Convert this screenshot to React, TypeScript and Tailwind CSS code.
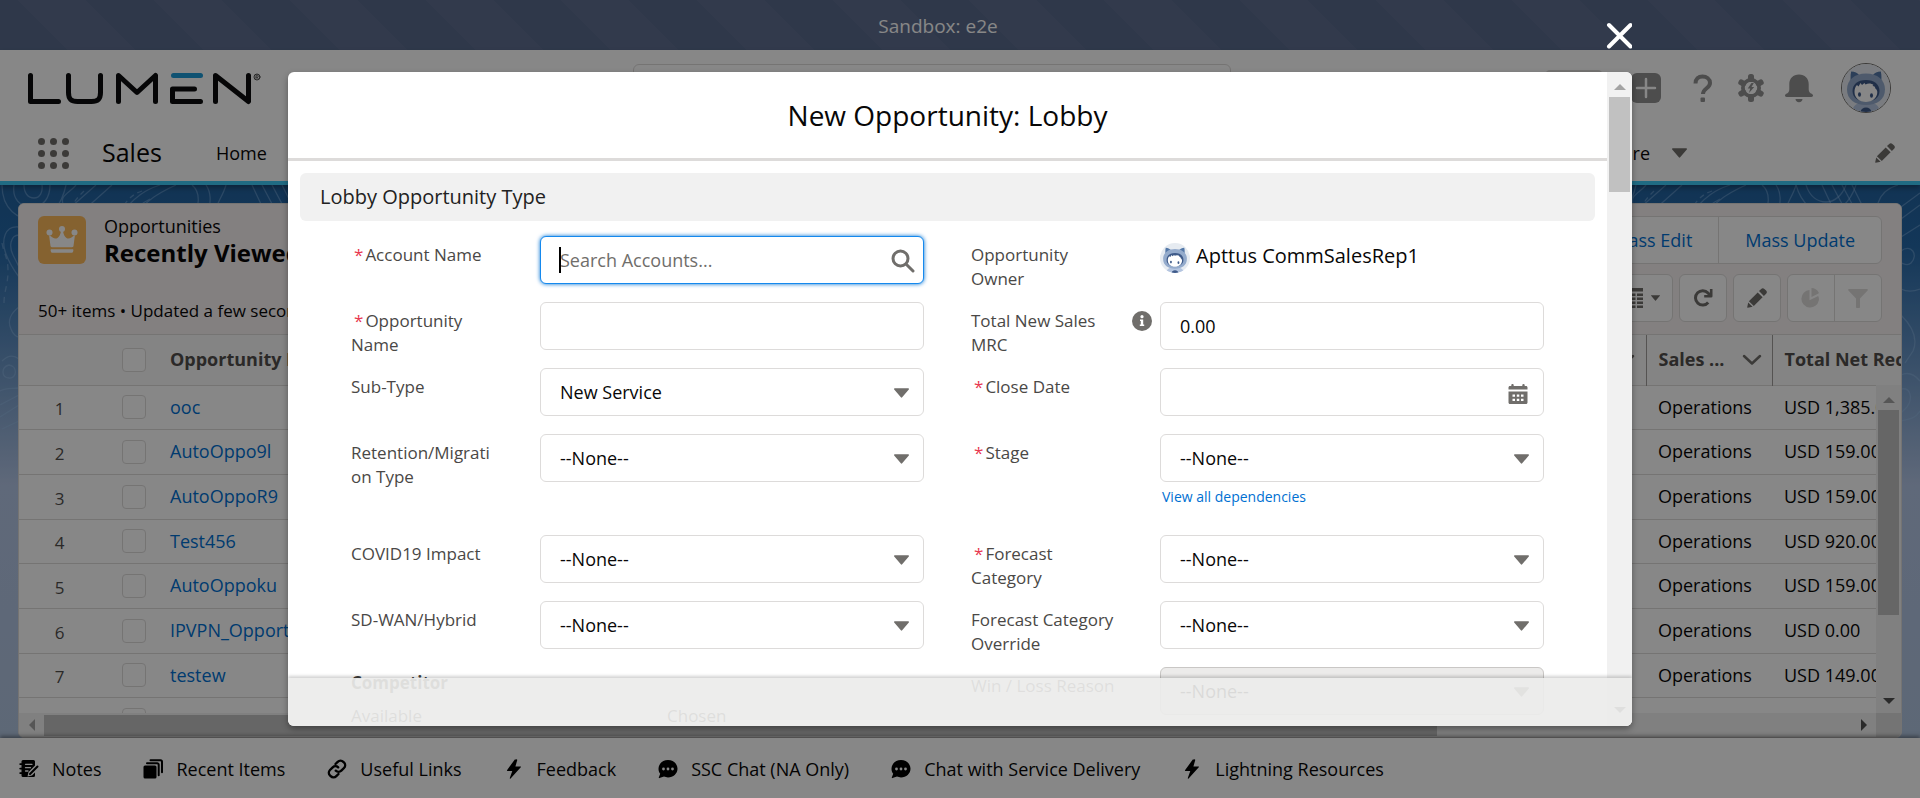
import type { ReactNode } from "react";

type IconProps = { className?: string };

const rows = [
  { name: "ooc", amount: "USD 1,385.00" },
  { name: "AutoOppo9l", amount: "USD 159.00" },
  { name: "AutoOppoR9", amount: "USD 159.00" },
  { name: "Test456", amount: "USD 920.00" },
  { name: "AutoOppoku", amount: "USD 159.00" },
  { name: "IPVPN_Opportunity", amount: "USD 0.00" },
  { name: "testew", amount: "USD 149.00" },
  { name: "", amount: "" },
];

function Triangle({ className = "" }: IconProps) {
  return (
    <svg viewBox="0 0 16 10" className={className} fill="currentColor" aria-hidden="true">
      <path d="M.8 0h14.4c.7 0 1 .7.6 1.200L8.700 9.600c-.4.500-1 .5-1.400 0L.2 1.200C-.2.700.1 0 .8 0z" />
    </svg>
  );
}

function ScrollArrow({ className = "" }: IconProps) {
  return (
    <svg viewBox="0 0 12 6" className={className} fill="currentColor" aria-hidden="true">
      <path d="M6 0l6 6H0z" />
    </svg>
  );
}

function Logo() {
  return (
    <svg viewBox="0 0 236 36" className="h-9 w-[236px]" fill="none" strokeWidth="5" strokeLinecap="round" strokeLinejoin="round" role="img" aria-label="Lumen">
      <g stroke="#0c0d0e">
        <path d="M4.500 5.500v26h28" />
        <path d="M42.500 5.500v17c0 6.500 2.500 9 9 9h14c6.500 0 9-2.500 9-9v-17" />
        <path d="M92.500 31.500v-26l18.500 17 18.500-17v26" />
        <path d="M174.500 31.500h-28v-12.500h22" />
        <path d="M189.500 31.500v-26l33 26v-26" />
      </g>
      <path d="M147.500 5.500h27" stroke="#1e9bd7" />
      <circle cx="231" cy="7" r="3" stroke="#4a4a4a" strokeWidth="1" />
      <path d="M230 8.800v-3.600h1.300a1 1 0 010 2h-1.300m1.200 0l1 1.600" stroke="#4a4a4a" strokeWidth="0.800" />
    </svg>
  );
}

function Astro({ className = "" }: IconProps) {
  return (
    <svg viewBox="1 1 48 48" className={className} aria-hidden="true">
      <defs>
        <clipPath id="astro-clip">
          <circle cx="25" cy="25" r="24" />
        </clipPath>
      </defs>
      <g clipPath="url(#astro-clip)">
        <rect width="50" height="50" fill="#e6ebf1" />
        <path d="M11 50c0-7 5-11 14-11s14 4 14 11z" fill="#b4c5e0" />
        <path d="M10 22c-.500-5-.8-10 .2-13.500 3.500 0 6.300 1.500 8.300 4z" fill="#5478a8" />
        <path d="M40 22c.5-5 .8-10-.2-13.500-3.500 0-6.300 1.500-8.300 4z" fill="#5478a8" />
        <path d="M25 10.500c11.500 0 19 6.500 19 16 0 10-8 15.500-19 15.500S6 36.500 6 26.500c0-9.500 7.500-16 19-16z" fill="#94abcc" />
        <path d="M25 17c8.500 0 13.500 4.500 13.500 11S33 38.500 25 38.500 11.500 34.500 11.500 28 16.500 17 25 17z" fill="#3e5a89" />
        <path d="M13.500 29c0-3 .8-5.500 2.500-7l1.500 1.500 2-3.500 1.500 2 2.500-2 1 1.500c3-1.500 6-1 8 .5l-1 .8 2.800 1.200-.5 1c1.500 1 2.500 2.500 2.500 4 0 6-5 10-11.400 10S13.500 35 13.500 29z" fill="#fff" />
        <ellipse cx="18.500" cy="31.500" rx="1.500" ry="2.200" fill="#3e5a89" />
        <ellipse cx="30.500" cy="32.500" rx="1.500" ry="2.200" fill="#3e5a89" />
        <path d="M19.500 50c0-3.500 2.200-5.500 5.500-5.500s5.500 2 5.500 5.500z" fill="#3e5a89" />
      </g>
    </svg>
  );
}

function Pencil({ className = "" }: IconProps) {
  return (
    <svg viewBox="0 0 20 20" className={className} fill="currentColor" aria-hidden="true">
      <path d="M1.900 13.200l8.800-8.800 4.900 4.900-8.800 8.800zM.2 19.200l1-4.800 4.400 4.400-4.800 1c-.4.100-.7-.2-.6-.6zM12 3.100L14.200.9c1-1 2.200-1 3.200 0l1.700 1.700c1 1 1 2.200 0 3.200L16.900 8z" />
    </svg>
  );
}

function QuestionIcon() {
  return (
    <svg viewBox="0 0 28 30" className="h-[30px] w-7" fill="none" aria-hidden="true">
      <path d="M6.500 10.500C6.500 6 9.500 3.500 13.500 3.500S21 6 21 10c0 5.500-7 5-7 11" stroke="currentColor" strokeWidth="4" />
      <rect x="11.500" y="24.500" width="4.500" height="4.500" rx="1" fill="currentColor" />
    </svg>
  );
}

function GearIcon() {
  return (
    <svg viewBox="0 0 28 30" className="h-[30px] w-7" aria-hidden="true">
      <g fill="currentColor">
        {[0, 60, 120, 180, 240, 300].map((a) => (
          <rect key={a} x="11" y="1" width="6" height="8" rx="2.500" transform={`rotate(${a} 14 15)`} />
        ))}
        <path fillRule="evenodd" d="M14 5a10 10 0 110 20 10 10 0 010-20zm0 3.800a6.200 6.200 0 100 12.400 6.200 6.200 0 000-12.400z" />
        <path d="M14.500 10l-3.800 5.500h2.500l-1.200 4.500 5.200-6h-2.700l2.300-4z" />
      </g>
    </svg>
  );
}

function BellIcon() {
  return (
    <svg viewBox="0 0 28 30" className="h-[30px] w-7" fill="currentColor" aria-hidden="true">
      <path d="M14 1.500c-5.800 0-9.700 4-9.700 9.500v5.500c0 2.500-1.300 3.500-3 4.300-1.900.9-1.700 3.200.3 3.200h24.800c2 0 2.200-2.300.3-3.200-1.700-.8-3-1.800-3-4.300V11c0-5.500-3.900-9.500-9.700-9.500zM10.500 26h7c0 2-1.500 3.200-3.500 3.200S10.500 28 10.500 26z" />
    </svg>
  );
}

function Crown() {
  return (
    <svg viewBox="0 0 48 48" className="size-12" fill="#fff" aria-hidden="true">
      <path d="M12 19.500c2 2 5 4 7.500 2.500 2-1.300 3-4 3.500-7h2c.5 3 1.500 5.700 3.500 7 2.500 1.500 5.500-.5 7.500-2.500h.9L35.500 30c-.2.800-.7 1.200-1.500 1.200H14c-.8 0-1.300-.4-1.500-1.200L11.100 19.500z" />
      <circle cx="24" cy="13" r="3" />
      <circle cx="11.500" cy="16.500" r="3" />
      <circle cx="36.500" cy="16.500" r="3" />
      <path d="M13.500 33.300h21c.6 0 1 .4.900 1l-.2.900c-.2 1-.9 1.600-1.900 1.600H14.700c-1 0-1.700-.6-1.900-1.600l-.2-.9c-.1-.6.300-1 .9-1z" />
    </svg>
  );
}

function ColumnChevron({ className = "" }: IconProps) {
  return (
    <svg viewBox="0 0 20 12" className={className} fill="none" stroke="#706e6b" strokeWidth="2.500" strokeLinecap="round" strokeLinejoin="round" aria-hidden="true">
      <path d="M2 2l8 7.500L18 2" />
    </svg>
  );
}

function NotesIcon() {
  return (
    <svg viewBox="0 0 20 20" className="size-5" aria-hidden="true">
      <path d="M4 1h10.500A1.500 1.500 0 0116 2.500v4L9.500 13l-1 4.500 4.500-1 3-3v3a1.500 1.500 0 01-1.500 1.500H4A1.500 1.500 0 012.500 16.500V15H1.200a.9.900 0 010-1.800H2.500V10.500H1.200a.9.900 0 010-1.800H2.500V6H1.200a.9.900 0 010-1.800H2.500V2.500A1.500 1.500 0 014 1z" fill="#000" />
      <path d="M6.500 5.300h6.500M6.500 8.700h5M6.500 12h2.500" stroke="#fff" strokeWidth="1.300" strokeLinecap="round" />
      <path d="M11 15l6.500-6.500M17 9l1.500-1.500" stroke="#000" strokeWidth="2" strokeLinecap="round" />
    </svg>
  );
}

function CopiesIcon() {
  return (
    <svg viewBox="0 0 20 20" className="size-5" aria-hidden="true">
      <rect x="0.500" y="6.500" width="13" height="13" rx="1.500" fill="#000" />
      <path d="M4 4.300h10.200a1.500 1.500 0 011.500 1.500v10.500M7.500 1.300h10A1.500 1.500 0 0119 2.800v10.500" fill="none" stroke="#000" strokeWidth="2" strokeLinecap="round" />
    </svg>
  );
}

function ChainIcon() {
  return (
    <svg viewBox="0 0 20 20" className="size-5" fill="none" stroke="#000" strokeWidth="2.400" strokeLinecap="round" aria-hidden="true">
      <path d="M8.500 5l2.200-2.200a3.900 3.900 0 015.600 0l.7.700a3.900 3.900 0 010 5.500l-2.700 2.700a3.900 3.900 0 01-5.500 0" />
      <path d="M11.500 15l-2.200 2.200a3.900 3.900 0 01-5.600 0L3 16.500A3.900 3.900 0 013 11l2.700-2.700a3.900 3.900 0 015.500 0" />
    </svg>
  );
}

function BoltIcon() {
  return (
    <svg viewBox="0 0 20 20" className="size-5" aria-hidden="true">
      <path d="M10.800.5L3 11.200c-.3.400 0 .8.400.8h4.900L5.800 19c-.2.600.4.900.8.400L16.800 8.200c.3-.4.100-.8-.4-.8h-5l1.800-6.100c.2-.8-.5-1.200-1-.8z" fill="#000" />
    </svg>
  );
}

function ChatIcon() {
  return (
    <svg viewBox="0 0 20 20" className="size-5" aria-hidden="true">
      <path d="M10 1c5.300 0 9.500 3.900 9.500 8.700s-4.200 8.700-9.500 8.700c-1.400 0-2.800-.3-4-.8l-4.600 1.500c-.5.200-.8-.2-.6-.7l1.400-3.700C1.100 13.300.5 11.600.5 9.700.5 4.900 4.700 1 10 1z" fill="#000" />
      <circle cx="5.500" cy="10" r="1.400" fill="#fff" />
      <circle cx="10" cy="10" r="1.400" fill="#fff" />
      <circle cx="14.500" cy="10" r="1.400" fill="#fff" />
    </svg>
  );
}

const utilities = [
  { label: "Notes", Icon: NotesIcon },
  { label: "Recent Items", Icon: CopiesIcon },
  { label: "Useful Links", Icon: ChainIcon },
  { label: "Feedback", Icon: BoltIcon },
  { label: "SSC Chat (NA Only)", Icon: ChatIcon },
  { label: "Chat with Service Delivery", Icon: ChatIcon },
  { label: "Lightning Resources", Icon: BoltIcon },
];

function Topography() {
  return (
    <svg className="absolute inset-0 h-full w-full" fill="none" stroke="#9cc3ee" strokeOpacity="0.4" strokeWidth="1.300" aria-hidden="true">
      <defs>
        <g id="contours">
          <path d="M14 0c-2 14 6 22 18 22S50 12 50 0M24 0c0 8 4 13 10 13s9-6 8-13M2 0c0 24 16 36 34 34S62 18 66 0" />
          <path d="M76 0c-6 8-18 10-12 22M96 0L62 30M112 0L74 34M160 0c-12 4-26 10-42 34M176 0c-22 10-32 18-44 34M192 0c10 8 6 22 2 34M206 0c8 12 2 24 2 34M150 14c-8 4-18 12-24 20" />
          <path d="M226 0c-4 14-12 20-12 34M252 0l16 34M262 0l18 34M272 0l18 34M282 0l12 24" />
          <path d="M84 6c-6 6-12 12-14 22M142 6c-12 4-18 12-24 26" strokeDasharray="5 4" />
        </g>
      </defs>
      <use href="#contours" />
      <use href="#contours" x="1570" />
      <path d="M1898 0c-14 4-18 12-20 18M1806 0c4 12 12 17 20 17s16-6 20-17M1796 0c6 20 18 28 30 28s24-10 30-28" />
      <path d="M19 42C4 40 2 56 5 66s8 18 14 26M19 50c-9 0-10 12-6 20l6 12M19 122c-8 6-12 14-8 22 2 6 6 8 8 8M2 176c6-6 12-6 17-2M9 180c-8 2-8 12 0 13s9-12 0-13M0 206c6-4 12-2 19-3M0 220l19-10M0 232l19-12M2 244l17-8" />
      <path d="M2 58c2 12 6 14 6 28s-4 20-4 32" strokeDasharray="6 5" />
      <path d="M1901 22l19-14M1901 34l19-14M1901 52l19-12M1901 66c10-8 18 4 10 12-4 4-8 0-10 0M1901 104c8 4 14 2 19 0M1901 130c10 10 18 22 12 36l-8 12M1901 190c8-4 14 0 19 6M1901 204c10-2 12 10 6 18l-6 6M1901 236c8-2 14-2 19-10" />
    </svg>
  );
}

function ControlSelect({ id, value, disabled }: { id: string; value: string; disabled?: boolean }) {
  return (
    <div className="relative">
      <select
        id={id}
        disabled={disabled}
        className="block h-12 w-full appearance-none rounded-[6px] border border-[#dddbda] bg-white px-[19px] text-[18px] text-[#080707] opacity-100 disabled:border-[#c9c7c5] disabled:bg-[#ecebea]"
      >
        <option>{value}</option>
      </select>
      <Triangle className="pointer-events-none absolute top-5 right-[15px] h-[10px] w-[15px] text-[#706e6b]" />
    </div>
  );
}

function Field({ id, label, required, info, children }: { id?: string; label: string; required?: boolean; info?: boolean; children: ReactNode }) {
  return (
    <div className="flex min-h-[55px] items-start">
      <div className="flex w-[189px] shrink-0 justify-between pt-[7px] pr-2">
        <label htmlFor={id} className="w-[146px] text-[17px] leading-6 break-words text-[#4a4846]">
          {required && <span className="pr-[2px] pl-[3px] text-[#e8384f]">*</span>}
          {label}
        </label>
        {info && (
          <button type="button" aria-label="Help" className="mt-[2px] size-5 rounded-full bg-[#706e6b] text-white">
            <svg viewBox="0 0 20 20" className="size-5" fill="currentColor" aria-hidden="true">
              <circle cx="10" cy="5.700" r="1.600" />
              <path d="M8 8.500h3.200v5h1v1.500H7.800v-1.500h1V10H8z" />
            </svg>
          </button>
        )}
      </div>
      <div className="min-w-0 flex-1">{children}</div>
    </div>
  );
}

const inputClass = "block h-12 w-full rounded-[6px] border border-[#dddbda] bg-white px-[19px] text-[18px] text-[#080707] outline-none";

function Modal() {
  return (
    <div role="dialog" aria-label="New Opportunity: Lobby" className="absolute inset-y-[72px] left-[15%] w-[70%]">
      <button type="button" aria-label="Close" className="absolute -top-[50px] right-0 size-7 text-white">
        <svg viewBox="0 0 28 28" className="size-7" stroke="currentColor" strokeWidth="4" strokeLinecap="round" aria-hidden="true">
          <path d="M5 3l21.500 21.500M26.500 3L5 24.500" />
        </svg>
      </button>
      <div className="relative flex h-full overflow-hidden rounded-[6px] bg-white shadow-[0_3px_6px_rgba(0,0,0,0.35)]">
        <div className="min-w-0 flex-1 overflow-hidden">
          <header className="flex h-[89px] items-center justify-center border-b-[3px] border-[#dddbda]">
            <h2 className="text-[28px] leading-9 text-[#080707]">New Opportunity: Lobby</h2>
          </header>
          <h3 className="mx-3 mt-3 flex h-12 items-center rounded-[6px] bg-[#f1f1f1] px-5 text-[20px] text-[#222]">Lobby Opportunity Type</h3>
          <form className="mt-[15px] grid grid-cols-2 gap-x-[47px] gap-y-[11px] px-[63px]">
            <Field id="account" label="Account Name" required>
              <div className="relative">
                <input
                  id="account"
                  placeholder="Search Accounts..."
                  className="block h-12 w-full rounded-[6px] border border-[#1589ee] bg-white px-[19px] text-[18px] shadow-[0_0_4px_#0070d2] outline-none placeholder:text-[#706e6b]"
                />
                <span className="absolute top-[11px] left-[19px] h-[26px] w-[2px] bg-black" />
                <svg viewBox="0 0 24 24" className="absolute top-[13px] right-[9px] size-6 text-[#706e6b]" fill="none" stroke="currentColor" strokeLinecap="round" aria-hidden="true">
                  <circle cx="9.500" cy="9.500" r="7.500" strokeWidth="3" />
                  <path d="M15.500 15.500l6.500 6.500" strokeWidth="3" />
                </svg>
              </div>
            </Field>
            <Field label="Opportunity Owner">
              <div className="flex items-start gap-[6px]">
                <Astro className="mt-[7px] size-[30px]" />
                <span className="pt-[5px] text-[20px] leading-[30px] text-[#080707]">Apttus CommSalesRep1</span>
              </div>
            </Field>
            <Field id="name" label="Opportunity Name" required>
              <input id="name" className={inputClass} />
            </Field>
            <Field id="mrc" label="Total New Sales MRC" info>
              <input id="mrc" defaultValue="0.00" className={inputClass} />
            </Field>
            <Field id="subtype" label="Sub-Type">
              <ControlSelect id="subtype" value="New Service" />
            </Field>
            <Field id="close" label="Close Date" required>
              <div className="relative">
                <input id="close" className={inputClass} />
                <svg viewBox="0 0 20 20" className="absolute top-4 right-4 size-5 text-[#706e6b]" fill="currentColor" aria-hidden="true">
                  <path d="M4.500 0c.7 0 1.200.5 1.200 1.200V2h8.600v-.8a1.200 1.200 0 012.400 0V2H18c.9 0 1.500.6 1.500 1.500V5.500H.5V3.500C.5 2.600 1.100 2 2 2h1.300v-.8C3.300.5 3.800 0 4.500 0z" />
                  <path fillRule="evenodd" d="M.5 7.500h19v11c0 .9-.6 1.500-1.500 1.500H2c-.9 0-1.500-.6-1.500-1.500zM4.500 10.500v2.200h2.500v-2.200zm4.300 0v2.200h2.500v-2.200zm4.200 0v2.200h2.500v-2.200zM4.500 14.800V17h2.500v-2.200zm4.300 0V17h2.500v-2.200zm4.200 0V17h2.500v-2.200z" />
                </svg>
              </div>
            </Field>
            <Field id="retention" label="Retention/Migration Type">
              <ControlSelect id="retention" value="--None--" />
            </Field>
            <Field id="stage" label="Stage" required>
              <ControlSelect id="stage" value="--None--" />
              <a href="#dependencies" className="mt-[5px] mb-[17px] block pl-[2px] text-[14px] leading-5 text-[#0070d2]">View all dependencies</a>
            </Field>
            <Field id="covid" label="COVID19 Impact">
              <ControlSelect id="covid" value="--None--" />
            </Field>
            <Field id="forecast" label="Forecast Category" required>
              <ControlSelect id="forecast" value="--None--" />
            </Field>
            <Field id="sdwan" label="SD-WAN/Hybrid">
              <ControlSelect id="sdwan" value="--None--" />
            </Field>
            <Field id="override" label="Forecast Category Override">
              <ControlSelect id="override" value="--None--" />
            </Field>
            <div className="pt-1 text-[17px] leading-6 text-[#3e3e3c]">
              <div className="font-bold">Competitor</div>
              <div className="grid grid-cols-[316px_1fr] pt-[9px]">
                <span>Available</span>
                <span>Chosen</span>
              </div>
            </div>
            <Field id="reason" label="Win / Loss Reason">
              <ControlSelect id="reason" value="--None--" disabled />
            </Field>
          </form>
        </div>
        <div className="flex w-[25px] shrink-0 flex-col items-center bg-[#f1f1f1]">
          <div className="flex h-[25px] items-center pt-1">
            <ScrollArrow className="h-[6px] w-3 text-[#a3a3a3]" />
          </div>
          <div className="h-[95px] w-[21px] bg-[#c1c1c1]" />
          <div className="mt-auto flex h-[25px] items-center pb-2">
            <ScrollArrow className="h-[6px] w-3 rotate-180 text-[#505050]" />
          </div>
        </div>
        <div className="absolute inset-x-0 bottom-0 h-12 bg-[#ecebea]/92 shadow-[0_-2px_3px_rgba(0,0,0,0.18)]" />
      </div>
    </div>
  );
}

const toolButton = "flex size-12 items-center justify-center rounded-[6px] border border-[#dddbda] bg-white text-[#706e6b]";

function Page() {
  return (
    <div className="flex h-full flex-col">
      <div className="flex h-[50px] shrink-0 items-center justify-center bg-[repeating-linear-gradient(45deg,#596b8d_0_48px,#5f6e90_48px_96px)] pt-[2px] pr-11 text-[19px] text-white">
        Sandbox: e2e
      </div>

      <header className="relative z-10 shrink-0 border-b-4 border-[#3ecbf8] bg-white shadow-[0_3px_5px_rgba(0,0,0,0.3)]">
        <div className="flex h-[75px] items-center justify-between pr-[29px] pl-[26px]">
          <Logo />
          <div className="flex items-center gap-7 text-[#919191]">
            <div className="flex h-9 w-[58px] rounded-[5px] border-2 border-[#dddbda]">
              <span className="ml-auto w-6 rounded-r-[5px] border-2 border-[#919191]" />
            </div>
            <button type="button" aria-label="Add" className="size-[30px] rounded-[6px] bg-[#919191] text-white">
              <svg viewBox="0 0 30 30" className="size-[30px]" stroke="currentColor" strokeWidth="2.500" strokeLinecap="round" aria-hidden="true">
                <path d="M15 6v18M6 15h18" />
              </svg>
            </button>
            <div className="flex gap-5">
              <button type="button" aria-label="Help"><QuestionIcon /></button>
              <button type="button" aria-label="Setup"><GearIcon /></button>
              <button type="button" aria-label="Notifications"><BellIcon /></button>
            </div>
            <button type="button" aria-label="Profile" className="rounded-full border border-[#706e6b]">
              <Astro className="size-12" />
            </button>
          </div>
        </div>
        <input aria-label="Search" className="absolute top-[14px] left-[633px] h-12 w-[598px] rounded-[6px] border border-[#dddbda] bg-white" />
        <nav className="flex h-14 items-center pr-[25px] pl-[38px]">
          <button type="button" aria-label="App launcher" className="grid grid-cols-3 gap-[5px]">
            {Array.from({ length: 9 }, (_, i) => (
              <span key={i} className="size-[7px] rounded-full bg-[#706e6b]" />
            ))}
          </button>
          <span className="ml-[33px] text-[25px] text-[#080707]">Sales</span>
          <a href="#home" className="ml-[54px] text-[18px] text-[#080707]">Home</a>
          <button type="button" className="ml-auto flex items-center gap-[22px] text-[18px] text-[#080707]">
            More
            <Triangle className="h-[10px] w-[15px] text-[#706e6b]" />
          </button>
          <button type="button" aria-label="Edit navigation" className="ml-[188px] text-[#706e6b]">
            <Pencil className="size-5" />
          </button>
        </nav>
      </header>

      <main className="relative flex min-h-0 flex-1 flex-col bg-[linear-gradient(180deg,#22629f_0,#2468a8_60px,#b4c6e6_300px,#b0c4df_100%)] px-[18px] pt-[18px]">
        <Topography />
        <section className="relative flex min-h-0 flex-1 flex-col overflow-hidden rounded-[6px] border border-[#dddbda] bg-white">
          <div className="shrink-0 border-b border-[#dddbda] bg-[#f7f1f2] px-[19px] pt-3 pb-3">
            <div className="flex h-12 items-center">
              <div className="size-12 rounded-[6px] bg-[#fcb95b]"><Crown /></div>
              <div className="ml-[18px]">
                <p className="text-[18px] leading-[26px] text-[#080707]">Opportunities</p>
                <h1 className="text-[24px] leading-7 font-bold text-[#080707]">Recently Viewed</h1>
              </div>
              <div className="ml-auto flex h-12 rounded-[6px] border border-[#dddbda] bg-white text-[18px] text-[#0070d2]">
                <button type="button" className="border-r border-[#dddbda] px-[26px]">Mass Edit</button>
                <button type="button" className="px-[26px]">Mass Update</button>
              </div>
            </div>
            <div className="mt-[10px] flex h-12 items-center justify-between">
              <p className="pt-[26px] text-[17px] leading-6 text-[#080707]">50+ items • Updated a few seconds ago</p>
              <div className="flex gap-[6px]">
                <button type="button" aria-label="Display as" className="flex h-12 items-center gap-2 rounded-[6px] border border-[#dddbda] bg-white px-3 text-[#706e6b]">
                  <svg viewBox="0 0 20 20" className="size-5" fill="currentColor" aria-hidden="true">
                    <path d="M0 0h20v3.500H0zM0 5.500h5.500v2.500H0zM7 5.500h5.500v2.500H7zM14 5.500h6v2.500h-6zM0 9.500h5.500V12H0zM7 9.500h5.500V12H7zM14 9.500h6V12h-6zM0 13.500h5.500V16H0zM7 13.500h5.500V16H7zM14 13.500h6V16h-6zM0 17.500h5.500V20H0zM7 17.500h5.500V20H7zM14 17.500h6V20h-6z" />
                  </svg>
                  <Triangle className="h-[6px] w-[9px]" />
                </button>
                <button type="button" aria-label="Refresh" className={toolButton}>
                  <svg viewBox="0 0 20 20" className="size-5" fill="none" stroke="currentColor" aria-hidden="true">
                    <path d="M15.200 14.500A7.200 7.200 0 1115 5l2 2" strokeWidth="3" />
                    <path d="M18.200 1v7.200h-7" strokeWidth="2.600" strokeLinejoin="round" />
                  </svg>
                </button>
                <button type="button" aria-label="Edit list" className={toolButton}><Pencil className="size-5" /></button>
                <div className="flex h-12 rounded-[6px] border border-[#dddbda] bg-white text-[#dddbda]">
                  <button type="button" aria-label="Charts" className="flex w-[47px] items-center justify-center border-r border-[#dddbda]">
                    <svg viewBox="0 0 20 20" className="size-5" fill="currentColor" aria-hidden="true">
                      <path d="M8.500 2v10.200l8.700-4.300c.7 1.400.9 3 .6 4.600A8.800 8.800 0 118.500 2zM10.500 0c3 0 5.800 1.700 7.200 4.500.2.500.1.900-.3 1.100L10.500 9z" />
                    </svg>
                  </button>
                  <button type="button" aria-label="Filters" className="flex w-[46px] items-center justify-center">
                    <svg viewBox="0 0 20 20" className="size-5" fill="currentColor" aria-hidden="true">
                      <path d="M1 1h18c.8 0 1.100.8.600 1.400L12 10.500V19c0 .6-.4 1-1 1H9c-.6 0-1-.4-1-1v-8.500L.4 2.400C-.1 1.800.2 1 1 1z" />
                    </svg>
                  </button>
                </div>
              </div>
            </div>
          </div>

          <div className="relative min-h-0 flex-1 overflow-hidden">
            <table className="w-full table-fixed border-collapse text-[18px] whitespace-nowrap text-[#080707]">
              <colgroup>
                <col className="w-[103px]" />
                <col className="w-12" />
                <col className="w-[320px]" />
                <col />
                <col className="w-[126px]" />
                <col className="w-[129px]" />
              </colgroup>
              <thead>
                <tr className="h-[50px] border-b border-[#dddbda] bg-[#fafaf9] text-left text-[#514f4d]">
                  <th aria-label="Row" />
                  <th>
                    <input type="checkbox" aria-label="Select all" className="block size-6 appearance-none rounded-[4px] border border-[#dddbda] bg-white" />
                  </th>
                  <th>Opportunity Name</th>
                  <th className="border-r border-[#a09e9c]">
                    <ColumnChevron className="mr-[11px] ml-auto h-3 w-5" />
                  </th>
                  <th className="border-r border-[#a09e9c] pl-3">
                    <span className="flex items-center justify-between pr-[10px]">
                      Sales ...
                      <ColumnChevron className="h-3 w-5" />
                    </span>
                  </th>
                  <th className="overflow-hidden pl-3">Total Net Recurring</th>
                </tr>
              </thead>
              <tbody>
                {rows.map((row, i) => (
                  <tr key={i} className="h-[45px] border-b border-[#dddbda] nth-[3n+1]:h-11">
                    <td className="pt-1 pr-[22px] text-center text-[17px] text-[#514f4d]">{i + 1}</td>
                    <td>
                      <input type="checkbox" aria-label={`Select row ${i + 1}`} className="block size-6 appearance-none rounded-[4px] border border-[#dddbda] bg-white" />
                    </td>
                    <td><a href="#record" className="text-[#0070d2]">{row.name}</a></td>
                    <td />
                    <td className="pl-3">Operations</td>
                    <td className="overflow-hidden pl-3">{row.amount}</td>
                  </tr>
                ))}
              </tbody>
            </table>
            <div className="absolute top-[50px] right-0 bottom-0 flex w-[25px] flex-col items-center bg-[#f1f1f1]">
              <div className="flex h-[25px] items-center pt-1"><ScrollArrow className="h-[6px] w-3 text-[#a3a3a3]" /></div>
              <div className="h-[205px] w-[21px] bg-[#c1c1c1]" />
              <div className="mt-auto flex h-[25px] items-center"><ScrollArrow className="h-[6px] w-3 rotate-180 text-[#505050]" /></div>
            </div>
          </div>
          <div className="flex h-6 shrink-0 items-center bg-[#f1f1f1]">
            <div className="flex w-[25px] justify-center"><ScrollArrow className="h-[6px] w-3 -rotate-90 text-[#a3a3a3]" /></div>
            <div className="h-[21px] w-[74%] bg-[#c1c1c1]" />
            <div className="ml-auto flex w-[25px] justify-center"><ScrollArrow className="h-[6px] w-3 rotate-90 text-[#505050]" /></div>
            <div className="h-full w-[25px] bg-[#dcdcdc]" />
          </div>
        </section>
      </main>

      <footer className="relative flex h-[60px] shrink-0 items-center gap-[42px] bg-white px-[19px] pt-[2px] text-[18px] text-[#080707] shadow-[0_-2px_4px_rgba(0,0,0,0.4)]">
        {utilities.map(({ label, Icon }) => (
          <button key={label} type="button" className="flex items-center gap-[13px]">
            <Icon />
            {label}
          </button>
        ))}
      </footer>
    </div>
  );
}

export default function App() {
  return (
    <div className="relative h-screen min-h-[600px] overflow-hidden font-['Open_Sans','Noto_Sans',sans-serif]">
      <Page />
      <div className="absolute inset-0 z-20 bg-black/47" />
      <div className="absolute inset-0 z-30">
        <Modal />
      </div>
    </div>
  );
}
